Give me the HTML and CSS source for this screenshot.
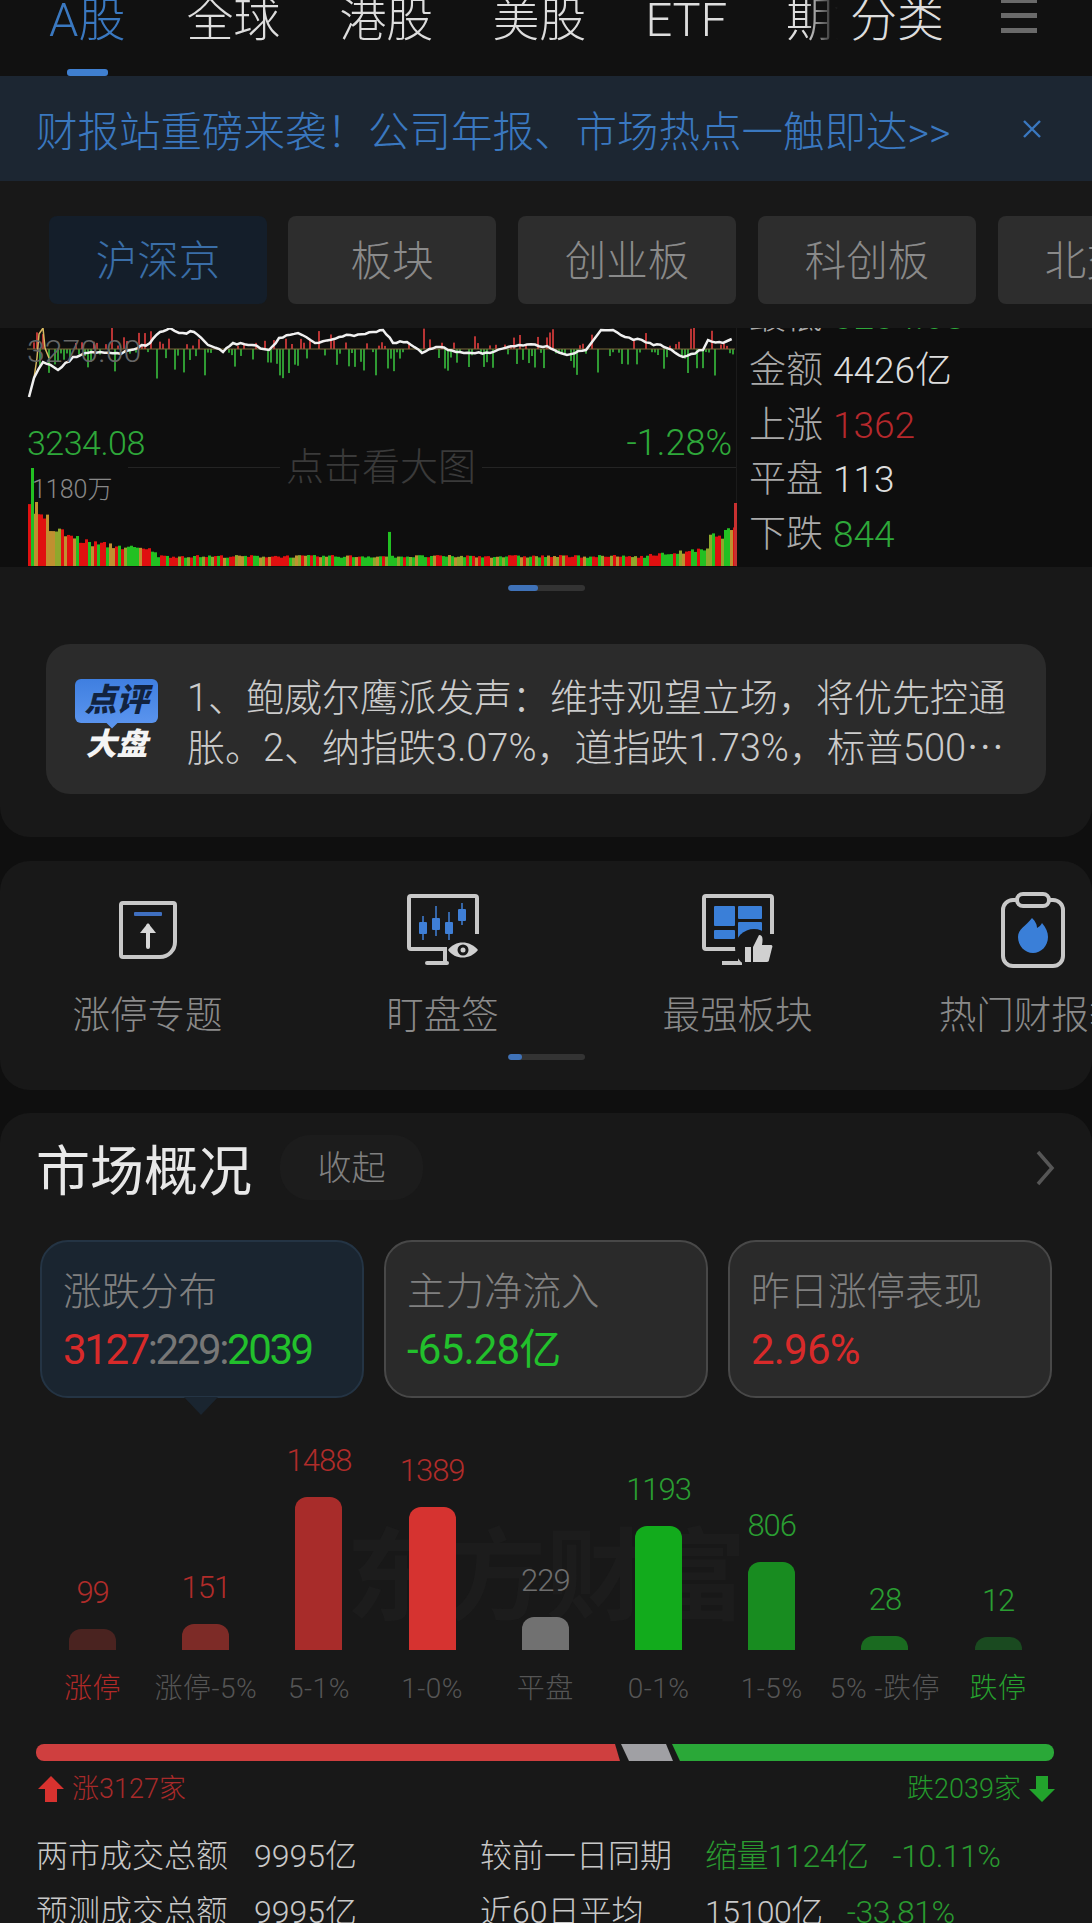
FILE: index.html
```html
<!DOCTYPE html>
<html lang="zh-CN">
<head>
    <meta charset="UTF-8">
    <meta name="viewport" content="width=device-width, initial-scale=1.0">
    <title>行情首页</title>
    <link rel="stylesheet" href="styles.css">
</head>
<body>
    <header class="nav">
        <div class="nav-scroll">
            <a class="nav-item active">A股</a>
            <a class="nav-item">全球</a>
            <a class="nav-item">港股</a>
            <a class="nav-item">美股</a>
            <a class="nav-item">ETF</a>
            <a class="nav-item">期货</a>
        </div>
        <a class="nav-item nav-fixed">分类</a>
        <div class="nav-menu"><span></span><span></span><span></span></div>
    </header>

    <div class="banner">
        <span class="banner-text">财报站重磅来袭！公司年报、市场热点一触即达&gt;&gt;</span>
        <svg class="banner-close" width="22" height="22" viewBox="0 0 22 22"><path d="M3 3l16 16M19 3L3 19" stroke="#3a78c0" stroke-width="2.4" fill="none"/></svg>
    </div>

    <section class="panel panel-market">
        <div class="tabs">
            <div class="tab active">沪深京</div>
            <div class="tab tab-2">板块</div>
            <div class="tab">创业板</div>
            <div class="tab">科创板</div>
            <div class="tab">北交所</div>
        </div>

        <div class="chart">
            <div class="chart-main">
                <svg id="chart-svg" width="710" height="239" viewBox="0 0 710 239"></svg>
                <span class="chart-label label-high">3270.00</span>
                <span class="chart-label label-low">3234.08</span>
                <span class="chart-label label-pct">-1.28%</span>
                <span class="chart-label label-vol">1180万</span>
                <div class="chart-hint"><i class="hint-left"></i><span>点击看大图</span><i></i></div>
            </div>
            <div class="quote">
                <div class="quote-row"><span class="quote-key">最低</span><span class="green">3234.08</span></div>
                <div class="quote-row"><span class="quote-key">金额</span><span class="white">4426亿</span></div>
                <div class="quote-row"><span class="quote-key">上涨</span><span class="red">1362</span></div>
                <div class="quote-row"><span class="quote-key">平盘</span><span class="white">113</span></div>
                <div class="quote-row"><span class="quote-key">下跌</span><span class="green">844</span></div>
            </div>
        </div>

        <div class="pager"><span></span></div>

        <div class="comment">
            <div class="comment-logo">
                <div class="logo-bubble">点评</div>
                <div class="logo-sub">大盘</div>
            </div>
            <p class="comment-text">1、鲍威尔鹰派发声：维持观望立场，将优先控通胀。2、纳指跌3.07%，道指跌1.73%，标普500⋯</p>
        </div>
    </section>

    <section class="panel panel-tools">
        <div class="tools">
            <div class="tool">
                <div class="tool-icon">
                    <svg width="60" height="60" viewBox="0 0 60 60">
                        <path d="M5 3h50a2 2 0 0 1 2 2v37a15 15 0 0 1-15 15H5a2 2 0 0 1-2-2V5a2 2 0 0 1 2-2z" fill="none" stroke="#c8c8c8" stroke-width="4"/>
                        <rect x="16" y="12" width="28" height="4" rx="1" fill="#3f6fc0"/>
                        <path d="M30 47V26" stroke="#d8d8d8" stroke-width="4" stroke-linecap="round"/>
                        <path d="M22 33l8-10 8 10z" fill="#d8d8d8"/>
                    </svg>
                </div>
                <div class="tool-name">涨停专题</div>
            </div>
            <div class="tool">
                <div class="tool-icon">
                    <svg width="72" height="72" viewBox="0 0 72 72">
                        <path d="M70 40V4a2 2 0 0 0-2-2H4a2 2 0 0 0-2 2v49a2 2 0 0 0 2 2h34v13" fill="none" stroke="#c8c8c8" stroke-width="4"/>
                        <path d="M20 69h20" stroke="#c8c8c8" stroke-width="4" stroke-linecap="round"/>
                        <g stroke="#3f7fd6" stroke-width="1.5">
                            <path d="M16 22v24M29 12v30M42 18v28M55 9v22"/>
                        </g>
                        <g fill="#3f7fd6">
                            <rect x="12" y="28" width="8" height="12" rx="1"/>
                            <rect x="25" y="24" width="8" height="12" rx="1"/>
                            <rect x="38" y="28" width="8" height="12" rx="1"/>
                            <rect x="51" y="15" width="8" height="12" rx="1"/>
                        </g>
                        <path d="M41 56c7-10 22-10 30 0-8 10-23 10-30 0z" fill="#d0d0d0"/>
                        <circle cx="56" cy="56" r="5.5" fill="#181818"/>
                        <circle cx="56" cy="56" r="2.5" fill="#d0d0d0"/>
                    </svg>
                </div>
                <div class="tool-name">盯盘签</div>
            </div>
            <div class="tool">
                <div class="tool-icon">
                    <svg width="72" height="72" viewBox="0 0 72 72">
                        <path d="M70 40V4a2 2 0 0 0-2-2H4a2 2 0 0 0-2 2v49a2 2 0 0 0 2 2h34v13M20 69h20" fill="none" stroke="#c8c8c8" stroke-width="4"/>
                        <g fill="#3a7fd8">
                            <rect x="12" y="12" width="21" height="20" rx="1"/>
                            <rect x="36" y="12" width="24" height="13" rx="1"/>
                            <rect x="12" y="36" width="21" height="9" rx="1"/>
                            <rect x="36" y="28" width="24" height="17" rx="1"/>
                        </g>
                        <circle cx="52" cy="54" r="19" fill="#181818"/>
                        <rect x="43" y="53" width="6" height="15" fill="#d0d0d0"/>
                        <path d="M51 53l6-12c4 0 4 4 3 10h9c1 0 2 1 1 3l-3 12c0 1-1 2-2 2H51z" fill="#d0d0d0"/>
                    </svg>
                </div>
                <div class="tool-name">最强板块</div>
            </div>
            <div class="tool">
                <div class="tool-icon">
                    <svg width="64" height="76" viewBox="0 0 64 76">
                        <rect x="2" y="8" width="60" height="66" rx="10" fill="none" stroke="#c8c8c8" stroke-width="4"/>
                        <rect x="16" y="2" width="32" height="12" rx="6" fill="#181818" stroke="#c8c8c8" stroke-width="4"/>
                        <path d="M31 26c4 4 5 7 5 10 2-1 4-3 5-5 4 5 6 9 6 14 0 9-7 16-15 16s-15-7-15-16c0-8 8-11 14-19z" fill="#3a7fd8"/>
                    </svg>
                </div>
                <div class="tool-name">热门财报季</div>
            </div>
        </div>
        <div class="pager"><span class="short"></span></div>
    </section>

    <section class="panel panel-overview">
        <div class="overview-head">
            <h2>市场概况</h2>
            <span class="fold">收起</span>
            <svg class="chevron" width="20" height="36" viewBox="0 0 20 36"><path d="M3 2l14 16L3 34" fill="none" stroke="#565656" stroke-width="3.5"/></svg>
        </div>

        <div class="cards">
            <div class="card active">
                <div class="card-title">涨跌分布</div>
                <div class="card-value"><span class="c-red">3127</span><span class="c-grey">:229:</span><span class="c-green">2039</span></div>
            </div>
            <div class="card">
                <div class="card-title">主力净流入</div>
                <div class="card-value c-green">-65.28亿</div>
            </div>
            <div class="card">
                <div class="card-title">昨日涨停表现</div>
                <div class="card-value c-red">2.96%</div>
            </div>
        </div>

        <div class="dist">
            <div class="watermark">东方财富</div>
            <div class="dist-col"><span class="dist-num v-red">99</span><div class="dist-bar" style="height:21px;background:#4a2320"></div><span class="dist-name n-red">涨停</span></div>
            <div class="dist-col"><span class="dist-num v-red">151</span><div class="dist-bar" style="height:26px;background:#7d2b27"></div><span class="dist-name">涨停-5%</span></div>
            <div class="dist-col"><span class="dist-num v-red">1488</span><div class="dist-bar" style="height:153px;background:#a82c2a"></div><span class="dist-name">5-1%</span></div>
            <div class="dist-col"><span class="dist-num v-red">1389</span><div class="dist-bar" style="height:143px;background:#d63330"></div><span class="dist-name">1-0%</span></div>
            <div class="dist-col"><span class="dist-num v-grey">229</span><div class="dist-bar" style="height:33px;background:#717171"></div><span class="dist-name">平盘</span></div>
            <div class="dist-col"><span class="dist-num v-green">1193</span><div class="dist-bar" style="height:124px;background:#12ab1c"></div><span class="dist-name">0-1%</span></div>
            <div class="dist-col"><span class="dist-num v-green">806</span><div class="dist-bar" style="height:88px;background:#188c20"></div><span class="dist-name">1-5%</span></div>
            <div class="dist-col"><span class="dist-num v-green">28</span><div class="dist-bar" style="height:14px;background:#1a6a20"></div><span class="dist-name">5% -跌停</span></div>
            <div class="dist-col"><span class="dist-num v-green">12</span><div class="dist-bar" style="height:13px;background:#1a4a20"></div><span class="dist-name n-green">跌停</span></div>
        </div>

        <div class="ratio">
            <div class="ratio-up"></div>
            <div class="ratio-flat"></div>
            <div class="ratio-down"></div>
        </div>

        <div class="totals">
            <div class="total total-up">
                <svg width="26" height="26" viewBox="0 0 26 26"><path d="M13 0l13 13h-7v13H7V13H0z" fill="#d8322f"/></svg>
                <span>涨3127家</span>
            </div>
            <div class="total total-down">
                <span>跌2039家</span>
                <svg width="26" height="26" viewBox="0 0 26 26"><path d="M13 26L0 13h7V0h12v13h7z" fill="#22a32c"/></svg>
            </div>
        </div>

        <div class="stats">
            <span>两市成交总额</span><span>9995亿</span><span>较前一日同期</span>
            <div class="stat-extra"><span class="stat-green">缩量1124亿</span><span class="stat-green">-10.11%</span></div>
            <span>预测成交总额</span><span>9995亿</span><span>近60日平均</span>
            <div class="stat-extra"><span>15100亿</span><span class="stat-green">-33.81%</span></div>
        </div>
    </section>

    <script src="chart.js"></script>
</body>
</html>
```

FILE: styles.css
```css
* {
    box-sizing: border-box;
}
html, body {
    margin: 0;
    padding: 0;
}
body {
    width: 1092px;
    height: 1923px;
    overflow: hidden;
    background: #0f0f0f;
    color: #ccc;
    font-family: Roboto, "Noto Sans CJK SC", sans-serif;
    font-weight: 300;
}

/* top nav */
.nav {
    display: flex;
    height: 76px;
    background: #111;
    position: relative;
}
.nav-scroll {
    display: flex;
    gap: 59px;
    width: 838px;
    height: 76px;
    flex: none;
    padding-left: 49px;
    overflow: hidden;
    white-space: nowrap;
    -webkit-mask-image: linear-gradient(to right, #000 805px, transparent 838px);
    mask-image: linear-gradient(to right, #000 805px, transparent 838px);
}
.nav-item {
    font-size: 47px;
    line-height: 40px;
    color: #ddd;
    flex: none;
}
.nav-item.active {
    color: #3a78c0;
    position: relative;
    margin-right: 2px;
}
.nav-item.active::after {
    content: "";
    position: absolute;
    left: 18px;
    top: 69px;
    width: 41px;
    height: 7px;
    border-radius: 3px;
    background: #3f7fd0;
}
.nav-fixed {
    margin-left: 12px;
}
.nav-menu {
    display: flex;
    flex-direction: column;
    gap: 10px;
    width: 36px;
    margin-left: 57px;
    margin-top: -2px;
}
.nav-menu span {
    display: block;
    height: 5px;
    background: #6a6a6a;
}

/* banner */
.banner {
    display: flex;
    align-items: center;
    justify-content: space-between;
    height: 105px;
    padding: 0 49px 0 36px;
    background: #1c2632;
}
.banner-text {
    font-size: 41.5px;
    color: #3a78c0;
    white-space: nowrap;
}

.panel {
    background: #181818;
    overflow: hidden;
}
.panel-market {
    padding-bottom: 43px;
    border-radius: 0 0 30px 30px;
}
.panel-tools {
    margin-top: 24px;
    border-radius: 30px;
    padding-top: 29px;
    height: 229px;
}
.panel-overview {
    margin-top: 23px;
    border-radius: 30px 30px 0 0;
    padding: 22px 37px 0 36px;
    height: 810px;
}

/* tabs */
.tabs {
    display: flex;
    gap: 22px;
    padding: 35px 0 24px 49px;
    overflow: hidden;
}
.tab {
    flex: none;
    width: 218px;
    height: 88px;
    line-height: 92px;
    text-align: center;
    font-size: 41.5px;
    color: #8a8a8a;
    background: #2d2d2d;
    border-radius: 8px;
}
.tab-2 {
    width: 208px;
    margin-left: -1px;
}
.tab.active {
    color: #3a6ea8;
    background: #141e2a;
}

/* chart */
.chart {
    display: flex;
    height: 239px;
    background: #0e0e0e;
    overflow: hidden;
}
.chart-main {
    position: relative;
    flex: none;
    width: 737px;
    padding-left: 27px;
    border-right: 1px solid #1b1b1b;
}
#chart-svg {
    display: block;
}
.chart-label {
    position: absolute;
    white-space: nowrap;
}
.label-high {
    left: 27px;
    top: 4px;
    font-size: 32px;
    line-height: 38px;
    color: #666;
}
.label-low {
    left: 27px;
    top: 96px;
    font-size: 34px;
    line-height: 38px;
    letter-spacing: -0.5px;
    color: #2ea83a;
}
.label-pct {
    right: 4px;
    top: 96px;
    font-size: 36px;
    line-height: 38px;
    color: #2ea83a;
}
.label-vol {
    left: 32px;
    top: 147px;
    font-size: 25px;
    line-height: 30px;
    color: #888;
}
.chart-hint {
    position: absolute;
    left: 128px;
    right: 0;
    top: 118px;
    display: flex;
    align-items: center;
    gap: 6px;
    font-size: 38px;
    line-height: 42px;
    color: #3a3a3a;
}
.chart-hint i {
    flex: 1;
    height: 1px;
    background: #242424;
}
.chart-hint i.hint-left {
    flex: none;
    width: 152px;
}

.quote {
    display: flex;
    flex-direction: column;
    justify-content: flex-end;
    flex: 1;
    padding: 0 0 5px 12px;
}
.quote-row {
    display: flex;
    flex: none;
    gap: 10px;
    height: 54.5px;
    line-height: 54px;
    font-size: 37px;
}
.quote-key {
    color: #aaa;
}
.white {
    color: #ddd;
}
.red {
    color: #b5282c;
}
.green {
    color: #2ea83a;
}

.pager {
    width: 77px;
    height: 6px;
    margin: 18px auto 0;
    border-radius: 3px;
    background: #333;
    overflow: hidden;
}
.pager span {
    display: block;
    width: 30px;
    height: 100%;
    background: #3f72b8;
    border-radius: 3px;
}
.pager span.short {
    width: 14px;
}

/* comment */
.comment {
    display: flex;
    align-items: center;
    gap: 29px;
    height: 150px;
    margin: 53px 46px 0;
    padding: 0 22px 0 29px;
    background: #2b2b2b;
    border-radius: 24px;
}
.comment-logo {
    flex: none;
    width: 83px;
}
.logo-bubble {
    position: relative;
    height: 44px;
    line-height: 42px;
    text-align: center;
    font-size: 32px;
    font-weight: 900;
    font-style: italic;
    color: #12233f;
    background: linear-gradient(#3f7fe0, #5a94ee);
    border-radius: 6px;
}
.logo-bubble::after {
    content: "";
    position: absolute;
    left: 30px;
    bottom: -6px;
    width: 14px;
    height: 7px;
    background: #5a94ee;
    clip-path: polygon(0 0, 100% 0, 50% 100%);
}
.logo-sub {
    margin-top: 7px;
    height: 30px;
    line-height: 30px;
    text-align: center;
    font-size: 31px;
    font-weight: 900;
    font-style: italic;
    color: #f4f4f4;
}
.comment-text {
    margin: 8px 0 0;
    font-size: 38px;
    line-height: 50px;
    color: #ccc;
}

/* tool row */
.tools {
    display: flex;
    overflow: hidden;
}
.tool {
    flex: none;
    width: 295px;
    text-align: center;
}
.tool-icon {
    display: flex;
    align-items: center;
    justify-content: center;
    height: 80px;
}
.tool-name {
    margin-top: 17px;
    height: 50px;
    line-height: 56px;
    font-size: 37.5px;
    color: #8a8a8a;
    white-space: nowrap;
}
.panel-tools .pager {
    margin-top: 17px;
}

/* overview */
.overview-head {
    display: flex;
    align-items: center;
    height: 65px;
}
.overview-head h2 {
    margin: 0;
    font-size: 54px;
    font-weight: 400;
    color: #e8e8e8;
}
.fold {
    width: 143px;
    height: 65px;
    line-height: 67px;
    margin-left: 28px;
    text-align: center;
    font-size: 34px;
    color: #808080;
    background: #1c1c1c;
    border-radius: 30px;
}
.chevron {
    margin-left: auto;
}
.cards {
    display: grid;
    grid-template-columns: repeat(3, 324px);
    gap: 20px;
    margin: 40px 0 0 4px;
}
.card {
    position: relative;
    height: 158px;
    padding: 24px 21px 0;
    background: #2a2a2a;
    border: 2px solid #484848;
    border-radius: 28px;
}
.card.active {
    background: #1a2530;
    border-color: #243444;
}
.card.active::after {
    content: "";
    position: absolute;
    left: 142px;
    bottom: -19px;
    width: 34px;
    height: 18px;
    background: #1a2530;
    clip-path: polygon(0 0, 100% 0, 50% 100%);
}
.card-title {
    font-size: 38.5px;
    line-height: 52px;
    color: #808080;
    white-space: nowrap;
}
.card-value {
    margin-top: 6px;
    font-size: 42px;
    line-height: 52px;
    letter-spacing: -0.8px;
    font-weight: 400;
    white-space: nowrap;
}
.card.active .card-value {
    letter-spacing: -2.4px;
}
.c-red {
    color: #d82a2a;
}
.c-grey {
    color: #777;
}
.c-green {
    color: #22c02c;
}

/* distribution */
.dist {
    position: relative;
    display: grid;
    grid-template-columns: repeat(9, 113.2px);
    align-items: end;
    height: 288px;
    margin-top: 20px;
}
.watermark {
    position: absolute;
    left: 310px;
    top: 95px;
    font-size: 100px;
    line-height: 130px;
    font-weight: 700;
    color: #1c1c1c;
    white-space: nowrap;
}
.dist-col {
    position: relative;
    display: flex;
    flex-direction: column;
    align-items: center;
}
.dist-num {
    font-size: 31px;
    line-height: 36px;
    letter-spacing: -1px;
    margin-bottom: 18px;
}
.v-red {
    color: #b02c2a;
}
.v-grey {
    color: #6e6e6e;
}
.v-green {
    color: #2a9e32;
}
.dist-bar {
    width: 47px;
    border-radius: 12px 12px 0 0;
}
.dist-name {
    margin-top: 20px;
    height: 36px;
    line-height: 38px;
    font-size: 28px;
    letter-spacing: 0.5px;
    color: #555;
    white-space: nowrap;
}
.n-red {
    color: #b02a28;
}
.n-green {
    color: #26a02e;
}

/* ratio bar */
.ratio {
    display: flex;
    height: 17px;
    margin-top: 38px;
}
.ratio > div {
    flex: none;
    height: 100%;
}
.ratio-up {
    width: 584px;
    background: #cf3f3f;
    border-radius: 8px 0 0 8px;
    clip-path: polygon(0 0, 579px 0, 100% 100%, 0 100%);
}
.ratio-flat {
    width: 52px;
    margin-left: 1px;
    background: #a0a0a4;
    clip-path: polygon(0 0, 45px 0, 100% 100%, 8px 100%);
}
.ratio-down {
    width: 382px;
    margin-left: -1px;
    background: #2aa838;
    border-radius: 0 8px 8px 0;
    clip-path: polygon(0 0, 100% 0, 100% 100%, 8px 100%);
}

.totals {
    display: flex;
    justify-content: space-between;
    margin-top: 12px;
    height: 32px;
    padding-left: 2px;
}
.total {
    display: flex;
    align-items: center;
    gap: 8px;
    font-size: 27px;
    line-height: 32px;
}
.total-up {
    color: #a82a2a;
}
.total-down {
    color: #249a2c;
}

.stats {
    display: grid;
    grid-template-columns: 218px 226px 225px auto;
    grid-auto-rows: 56px;
    align-items: center;
    margin-top: 23px;
    font-size: 32px;
    line-height: 40px;
    color: #c8c8c8;
    white-space: nowrap;
}
.stat-extra {
    display: flex;
    align-items: center;
    gap: 24px;
    letter-spacing: -0.5px;
}
.stat-extra span {
    height: 40px;
}
.stat-green {
    color: #2a9a30;
}
```

FILE: chart.js
```js
// draws the intraday chart into #chart-svg, coordinates are relative to the svg
var svg = document.getElementById('chart-svg');
var seed = 7;
function rnd() {
    seed = (seed * 16807) % 2147483647;
    return seed / 2147483647;
}
var html = '';

// upper part: red/green ticks round the base line
for (var i = 0; i < 235; i += 1) {
    var x = 3 + i * 3;
    if (rnd() < 0.2) continue;
    var up = rnd() < 0.42;
    var len = 3 + rnd() * rnd() * (up ? 24 : 28);
    html += '<rect x="' + x + '" width="2" y="' + (up ? 21 - len : 21) + '" height="' + len + '" fill="' + (up ? '#b83434' : '#2f9a33') + '"/>';
}
html += '<rect x="0" y="20.5" width="708" height="1" fill="#7a6a3a"/>';

// price line, points read off the picture
var pts = [[2,69],[7,50],[16,34],[31,42],[46,29],[65,24],[94,26],[123,15],[133,4],[143,0],[152,5],[167,4],[181,17],[196,24],[206,15],[225,17],[242,22],[252,10],[271,5],[288,15],[312,9],[346,4],[356,2],[366,15],[380,14],[395,25],[409,19],[433,24],[463,25],[492,17],[520,18],[540,27],[559,22],[574,2],[586,2],[598,9],[623,15],[637,19],[656,29],[676,22],[681,12],[696,15],[709,10]];
var line = '';
for (var p = 0; p < pts.length - 1; p += 1) {
    var a = pts[p], b = pts[p + 1];
    var steps = Math.max(1, Math.round((b[0] - a[0]) / 4));
    for (var s = 0; s < steps; s += 1) {
        var t = s / steps;
        var jitter = s === 0 ? 0 : (rnd() - 0.5) * 2.4;
        line += (a[0] + (b[0] - a[0]) * t).toFixed(1) + ',' + (a[1] + (b[1] - a[1]) * t + jitter).toFixed(1) + ' ';
    }
}
html += '<polyline points="7,50 10,30 12,6 16,0 18,20 22,30" fill="none" stroke="#d8b860" stroke-width="1.5"/>';
html += '<polyline points="' + line + '" fill="none" stroke="#f0f0f0" stroke-width="2.5"/>';

// volume bars along the bottom
function volume(x) {
    if (x < 10) return 62;
    if (x < 20) return 48;
    if (x < 60) return 40 - (x - 20) * 0.4;
    if (x < 130) return 24 - (x - 60) * 0.12;
    if (x > 358 && x < 364) return 36;
    if (x > 620) return 11 + (x - 620) * (x > 680 ? 0.3 : 0.1);
    return 10;
}
var colors = ['#e01010', '#e01010', '#22c022', '#22c022', '#c09030', '#e01010', '#22c022', '#8fa82c'];
for (var v = 0; v < 236; v += 1) {
    var vx = 1 + v * 3;
    var h = volume(vx) * (0.82 + rnd() * 0.28);
    var c = vx > 358 && vx < 364 ? '#22c022' : colors[Math.floor(rnd() * colors.length)];
    html += '<rect x="' + vx + '" width="3" y="' + (238 - h) + '" height="' + h + '" fill="' + c + '"/>';
}
html += '<rect x="4" width="3" y="140" height="98" fill="#22c022"/>';
html += '<rect x="8" width="3" y="174" height="64" fill="#c09030"/>';
html += '<rect x="707" width="3" y="175" height="63" fill="#c83030"/>';

svg.innerHTML = html;
```
